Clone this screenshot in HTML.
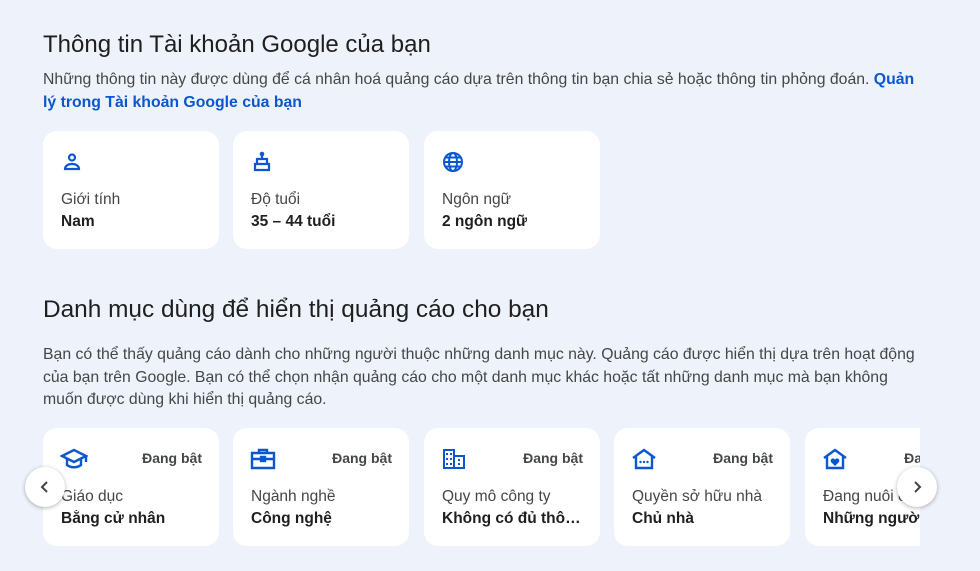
<!DOCTYPE html>
<html><head><meta charset="utf-8"><style>
body{margin:0;width:980px;height:571px;background:#eef2fa;font-family:"Liberation Sans",sans-serif;color:#1f1f1f;overflow:hidden;position:relative}
h2{position:absolute;left:43px;margin:0;font-weight:400;font-size:24px;color:#1f1f1f}
p{position:absolute;left:43px;margin:0;font-size:15.8px;line-height:22.5px;color:#444746;width:878px}
a{color:#0b57d0;font-weight:bold;text-decoration:none}
.card{position:absolute;width:176px;height:118px;background:#fff;border-radius:14px}
.card svg{position:absolute;left:17px;top:19px}
.l{position:absolute;left:18px;top:60px;font-size:15.5px;color:#444746;white-space:nowrap}
.v{position:absolute;left:18px;top:82px;font-size:15.5px;font-weight:bold;color:#1f1f1f;white-space:nowrap;max-width:142px;overflow:hidden;text-overflow:ellipsis}
.s{position:absolute;right:17px;top:22px;font-size:14px;font-weight:bold;color:#444746}
.clip{position:absolute;left:0;top:428px;width:920px;height:120px;overflow:hidden}
.btn{position:absolute;width:40px;height:40px;border-radius:50%;background:#fff;box-shadow:0 1px 4px rgba(0,0,0,.3);display:flex;align-items:center;justify-content:center}
</style></head><body>
<h2 style="top:31px">Thông tin Tài khoản Google của bạn</h2>
<p style="top:69px">Những thông tin này được dùng để cá nhân hoá quảng cáo dựa trên thông tin bạn chia sẻ hoặc thông tin phỏng đoán. <a>Quản lý trong Tài khoản Google của bạn</a></p>

<div class="card" style="left:43px;top:131px"><svg width="24" height="24" viewBox="0 0 24 24" fill="none" stroke="#0b57d0" stroke-width="2.2"><circle cx="12" cy="7.5" r="3"/><path d="M5 19h14c0-3-3-5-7-5s-7 2-7 5z"/></svg><div class="l">Giới tính</div><div class="v">Nam</div></div>
<div class="card" style="left:233px;top:131px"><svg width="24" height="24" viewBox="0 0 24 24" fill="none" stroke="#0b57d0" stroke-width="2.2"><circle cx="12" cy="4" r="1.2" fill="#0b57d0"/><path d="M12 5v4M7 9h10v5H7zM5 14h14v6H5z"/></svg><div class="l">Độ tuổi</div><div class="v">35 – 44 tuổi</div></div>
<div class="card" style="left:424px;top:131px"><svg width="24" height="24" viewBox="0 0 24 24" fill="none" stroke="#0b57d0" stroke-width="2"><circle cx="12" cy="12" r="9"/><ellipse cx="12" cy="12" rx="4" ry="9"/><path d="M3 12h18M4.5 7.5h15M4.5 16.5h15"/></svg><div class="l">Ngôn ngữ</div><div class="v">2 ngôn ngữ</div></div>

<h2 style="top:296px;font-size:24.4px">Danh mục dùng để hiển thị quảng cáo cho bạn</h2>
<p style="top:344px">Bạn có thể thấy quảng cáo dành cho những người thuộc những danh mục này. Quảng cáo được hiển thị dựa trên hoạt động của bạn trên Google. Bạn có thể chọn nhận quảng cáo cho một danh mục khác hoặc tất những danh mục mà bạn không muốn được dùng khi hiển thị quảng cáo.</p>

<div class="clip">
<div class="card" style="left:43px;top:0"><svg width="28" height="24" viewBox="0 0 28 24" fill="none" stroke="#0b57d0" stroke-width="2.4"><path d="M2 9l12-6 12 6-12 6z"/><path d="M7 12v6c4 3 10 3 14 0v-6M26 9v6"/></svg><div class="s">Đang bật</div><div class="l">Giáo dục</div><div class="v">Bằng cử nhân</div></div>
<div class="card" style="left:233px;top:0"><svg width="26" height="24" viewBox="0 0 26 24" fill="none" stroke="#0b57d0" stroke-width="2.4"><path d="M9 6V3h8v3M2 6h22v15H2zM2 12h22"/><rect x="11" y="10" width="4" height="4" fill="#0b57d0"/></svg><div class="s">Đang bật</div><div class="l">Ngành nghề</div><div class="v">Công nghệ</div></div>
<div class="card" style="left:424px;top:0"><svg width="26" height="24" viewBox="0 0 26 24"><path fill="#0b57d0" d="M2 2h12v6h10v14H2zM4 4v16h8V4zM14 10v10h8V10z"/><g fill="#0b57d0"><rect x="5" y="6" width="2" height="2"/><rect x="9" y="6" width="2" height="2"/><rect x="5" y="11" width="2" height="2"/><rect x="9" y="11" width="2" height="2"/><rect x="5" y="16" width="2" height="2"/><rect x="9" y="16" width="2" height="2"/><rect x="17" y="12" width="2" height="2"/><rect x="17" y="16" width="2" height="2"/></g></svg><div class="s">Đang bật</div><div class="l">Quy mô công ty</div><div class="v">Không có đủ thông tin</div></div>
<div class="card" style="left:614px;top:0"><svg width="26" height="24" viewBox="0 0 26 24" fill="none" stroke="#0b57d0" stroke-width="2.4"><path d="M2 11L13 3l11 8M5 9v12h16V9"/><g fill="#0b57d0" stroke="none"><circle cx="9.5" cy="15" r="1.2"/><circle cx="13" cy="15" r="1.2"/><circle cx="16.5" cy="15" r="1.2"/></g></svg><div class="s">Đang bật</div><div class="l">Quyền sở hữu nhà</div><div class="v">Chủ nhà</div></div>
<div class="card" style="left:805px;top:0"><svg width="26" height="24" viewBox="0 0 26 24" fill="none" stroke="#0b57d0" stroke-width="2.4"><path d="M2 11L13 3l11 8M5 9v12h16V9"/><path fill="#0b57d0" stroke="none" d="M13 19l-4-4a2.3 2.3 0 014-2.5 2.3 2.3 0 014 2.5z"/></svg><div class="s">Đang bật</div><div class="l">Đang nuôi con</div><div class="v">Những người</div></div>
</div>
<div class="btn" style="left:25px;top:467px"><svg width="14" height="14" viewBox="0 0 14 14" fill="none" stroke="#444" stroke-width="2"><path d="M9 2L4 7l5 5"/></svg></div>
<div class="btn" style="left:897px;top:467px"><svg width="14" height="14" viewBox="0 0 14 14" fill="none" stroke="#444" stroke-width="2"><path d="M5 2l5 5-5 5"/></svg></div>
</body></html>
